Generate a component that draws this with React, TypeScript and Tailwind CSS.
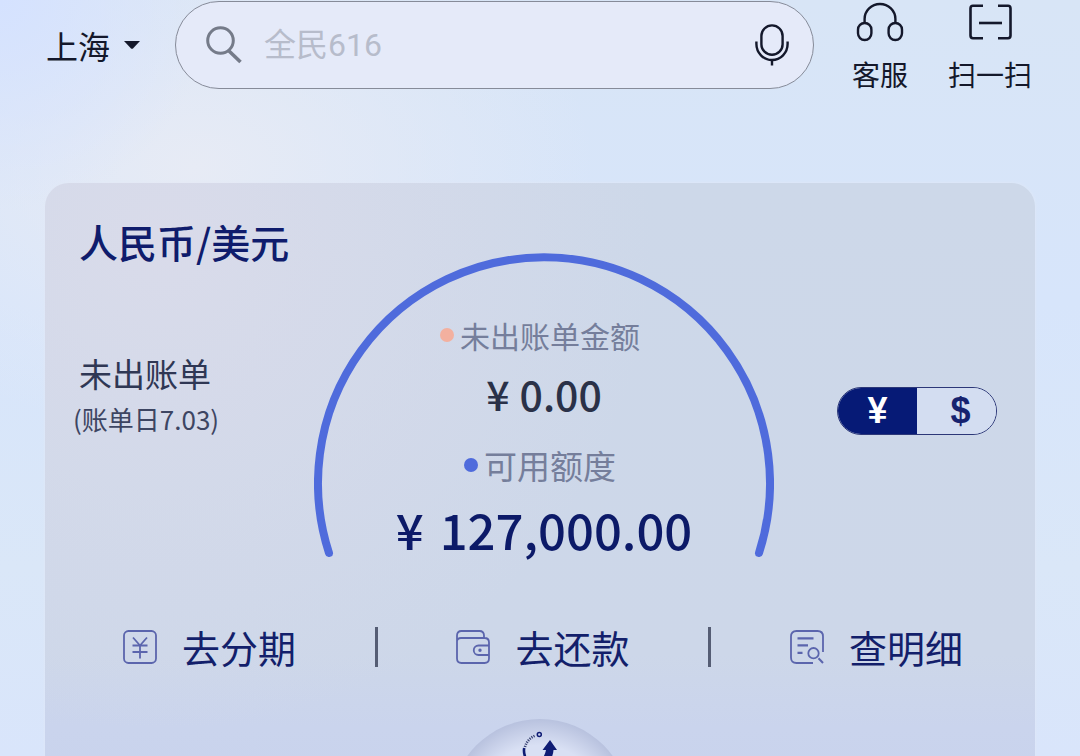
import React, { useState } from 'react';

interface IconProps {
  className?: string;
}

const SearchIcon: React.FC<IconProps> = ({ className }) => (
  <svg className={className} viewBox="0 0 36 38" fill="none" stroke="#757b89" strokeWidth="3">
    <circle cx="14.5" cy="14.5" r="12.8" />
    <path d="M22.5 24.5 L34.5 36" strokeWidth="3.6" />
  </svg>
);

const MicIcon: React.FC<IconProps> = ({ className }) => (
  <svg className={className} viewBox="0 0 34 42" fill="none" stroke="#14182b" strokeWidth="2.4">
    <rect x="6.4" y="1.4" width="21.2" height="29.4" rx="10.6" />
    <path d="M1.4 17.5 V20 A15.6 16 0 0 0 32.6 20 V17.5" />
    <path d="M17 36 V41.5" />
  </svg>
);

const HeadsetIcon: React.FC<IconProps> = ({ className }) => (
  <svg className={className} viewBox="0 0 48 40" fill="none" stroke="#14182b" strokeWidth="2.4">
    <path d="M8.6 21 V17 A15.4 15 0 0 1 39.4 17 V21" />
    <rect x="2" y="21" width="13.4" height="17" rx="6.7" />
    <rect x="32.6" y="21" width="13.4" height="17" rx="6.7" />
  </svg>
);

const ScanIcon: React.FC<IconProps> = ({ className }) => (
  <svg className={className} viewBox="0 -2 44 40" fill="none" stroke="#14182b" strokeWidth="2.6">
    <path d="M15 1.8 H5 Q2.5 1.8 2.5 4.5 V31.5 Q2.5 34.2 5 34.2 H15" />
    <path d="M30 1.8 H40 Q42.5 1.8 42.5 4.5 V31.5 Q42.5 34.2 40 34.2 H30" />
    <path d="M11 19 H34" />
  </svg>
);

const InstallmentIcon: React.FC<IconProps> = ({ className }) => (
  <svg className={className} viewBox="0 0 34 34" fill="none" stroke="#5b65ad" strokeWidth="1.8">
    <rect x="1" y="1" width="32" height="32" rx="4.5" />
    <path d="M10 7.5 L17 15.5 L24 7.5 M9.5 15.5 H24.5 M9.5 22 H24.5 M17 15.5 V28.5" />
  </svg>
);

const WalletIcon: React.FC<IconProps> = ({ className }) => (
  <svg className={className} viewBox="0 0 34 34" fill="none" stroke="#5b65ad" strokeWidth="1.8">
    <path d="M28 8 V5.5 Q28 1 23.5 1 H5.5 Q1 1 1 5.5 V28.5 Q1 33 5.5 33 H28.5 Q33 33 33 28.5 V12.5 Q33 8 28.5 8 H5 Q1 8 1 11.5" />
    <path d="M33 15.5 H22.5 A4.7 4.7 0 0 0 22.5 25 H33" />
    <circle cx="24" cy="20.2" r="0.8" fill="#5b65ad" />
  </svg>
);

const DetailIcon: React.FC<IconProps> = ({ className }) => (
  <svg className={className} viewBox="0 0 34 34" fill="none" stroke="#5b65ad" strokeWidth="1.8">
    <path d="M23 33 H6.5 Q1 33 1 27.5 V6.5 Q1 1 6.5 1 H27.5 Q33 1 33 6.5 V22" />
    <path d="M7.5 8.3 H23.5 M7.5 15.3 H18 M7.5 22.8 H12.5" strokeWidth="2.2" />
    <circle cx="23.5" cy="23.2" r="5.2" />
    <path d="M28.5 28.2 L33 33" strokeWidth="2" />
  </svg>
);

const RefreshIcon: React.FC<IconProps> = ({ className }) => (
  <svg className={className} viewBox="0 0 36 40" fill="none" stroke="#0f1c74">
    <path d="M3 16 A17 17 0 0 1 13.5 4.5" strokeWidth="2.6" strokeDasharray="1.2 1.1" stroke="#3c4675" />
    <circle cx="17.3" cy="3.6" r="2" strokeWidth="1.5" />
    <path d="M2.2 17 Q1 24 6 31 L10 36" strokeWidth="2.6" />
    <path d="M28 9 L35 19 H31.5 Q31 29 21 36 L15 34 Q22.5 27 24 19 H20.5 Z" fill="#0f1c74" stroke="none" />
  </svg>
);

const actions = [
  { label: '去分期', Icon: InstallmentIcon },
  { label: '去还款', Icon: WalletIcon },
  { label: '查明细', Icon: DetailIcon },
];

const CurrencySwitch: React.FC = () => {
  const [currency, setCurrency] = useState<'CNY' | 'USD'>('CNY');
  const active = 'bg-[#061a76] text-white';
  const idle = 'bg-[#d3ddf1] text-[#16226f]';

  return (
    <div className="flex h-12 w-40 overflow-hidden rounded-full border border-[#2c3778] font-['Liberation_Sans',sans-serif] text-4xl font-bold">
      <button aria-label="人民币" aria-pressed={currency === 'CNY'} onClick={() => setCurrency('CNY')} className={`w-1/2 ${currency === 'CNY' ? active : idle}`}>
        ¥
      </button>
      <button aria-label="美元" aria-pressed={currency === 'USD'} onClick={() => setCurrency('USD')} className={`w-1/2 pl-2 ${currency === 'USD' ? active : idle}`}>
        $
      </button>
    </div>
  );
};

const Gauge: React.FC = () => (
  <div className="mt-[34px] grid">
    <svg className="col-start-1 row-start-1 w-full" viewBox="0 0 460 308" fill="none">
      <path d="M15 300 A226 226 0 1 1 445 300" stroke="#4f6bdc" strokeWidth="8" strokeLinecap="round" />
    </svg>
    <div className="col-start-1 row-start-1 flex flex-col items-center pt-[62px]">
      <div className="flex items-center gap-1.5 pr-2 text-[30px] leading-10 text-[#757e9b]">
        <span className="size-3.5 rounded-full bg-[#f3b09f]" />
        未出账单金额
      </div>
      <div className="mt-2.5 flex gap-2.5 text-[41px] leading-14 font-medium text-[#2a3148]">
        <span>¥</span>
        <span>0.00</span>
      </div>
      <div className="mt-5 flex items-center gap-1.5 pr-2 text-[33px] leading-12 text-[#757e9b]">
        <span className="size-3.5 rounded-full bg-[#4f6bdc]" />
        可用额度
      </div>
      <div className="mt-2 flex gap-4 text-[49px] leading-16 font-medium text-[#0c1a68]">
        <span>¥</span>
        <span>127,000.00</span>
      </div>
    </div>
  </div>
);

const App: React.FC = () => {
  const [keyword, setKeyword] = useState('');

  return (
    <div className="flex h-screen flex-col overflow-hidden bg-[radial-gradient(circle_at_0%_0%,#d5e2ff_0%,transparent_16%),radial-gradient(ellipse_at_18%_22%,#e7ebf5_0%,transparent_32%),linear-gradient(180deg,#d8e5f6_0%,#d7e5fb_40%,#dae7f8_75%,#d9e5fb_100%)] font-['Noto_Sans_CJK_SC',sans-serif]">
      <header className="flex h-[90px] shrink-0 items-center pr-12 pl-[46px] text-[#14182b]">
        <button className="flex items-center gap-3.5 text-[32px] leading-12">
          上海
          <svg className="h-2 w-4" viewBox="0 0 16 8" fill="#14182b">
            <path d="M0 0 H16 L9 7.4 Q8 8.3 7 7.4 Z" />
          </svg>
        </button>
        <label className="ml-[35px] flex h-[88px] min-w-0 flex-1 items-center rounded-full border-[1px] border-[#868b99] bg-[#e5eaf9] pr-6 pl-[30px]">
          <SearchIcon className="h-[38px] w-9 shrink-0" />
          <input
            type="text"
            aria-label="搜索"
            placeholder="全民616"
            value={keyword}
            onChange={e => setKeyword(e.target.value)}
            className="ml-[22px] min-w-0 flex-1 bg-transparent font-[Roboto,'Noto_Sans_CJK_SC',sans-serif] text-[32px] leading-12 outline-none placeholder:text-[#b7bccb]"
          />
          <button aria-label="语音搜索">
            <MicIcon className="h-[42px] w-[34px]" />
          </button>
        </label>
        <button className="ml-[38px] flex flex-col items-center gap-4 self-start pt-0.5 text-[28px] leading-8">
          <HeadsetIcon className="h-10 w-12" />
          客服
        </button>
        <button className="ml-10 flex flex-col items-center gap-4 self-start pt-0.5 text-[28px] leading-8">
          <ScanIcon className="h-10 w-11" />
          扫一扫
        </button>
      </header>

      <main className="mx-[45px] mt-[93px] flex-1 rounded-t-3xl bg-[radial-gradient(circle_at_12%_8%,#d9dbea_0%,transparent_45%),linear-gradient(180deg,#cdd8e9_0%,#cdd7e9_66%,#cad4ed_76%,#c5d1ec_100%)] pt-9 shadow-[0_0_3px_#e2e9f6]">
        <section className="grid grid-cols-[1fr_460px_1fr] items-start pr-5 pl-7">
          <div>
            <h1 className="pl-1.5 text-[39px] leading-11 font-medium whitespace-nowrap text-[#0f1c6c]">人民币/美元</h1>
            <p className="mt-[88px] pl-1.5 text-[33px] leading-11 text-[#2f3754]">未出账单</p>
            <p className="mt-1 text-[26px] leading-10 text-[#3d4562]">(账单日7.03)</p>
          </div>
          <Gauge />
          <div className="mt-[168px] mr-[18px] justify-self-end">
            <CurrencySwitch />
          </div>
        </section>

        <nav className="mt-[58px] flex items-center justify-between pr-[72px] pl-[78px]">
          {actions.map(({ label, Icon }, index) => (
            <React.Fragment key={label}>
              {index > 0 && <span className="h-10 w-[3px] bg-[#555d74]" />}
              <button className="flex items-center gap-[25px] text-[38px] leading-14 text-[#131f6b]">
                <Icon className="size-[34px]" />
                {label}
              </button>
            </React.Fragment>
          ))}
        </nav>

        <button
          aria-label="刷新"
          className="mx-auto mt-11 flex size-[180px] justify-center rounded-full bg-[radial-gradient(circle,#d9e0f4_50%,#b3bddb_74%)] pt-3"
        >
          <RefreshIcon className="h-10 w-9" />
        </button>
      </main>
    </div>
  );
};

export default App;
